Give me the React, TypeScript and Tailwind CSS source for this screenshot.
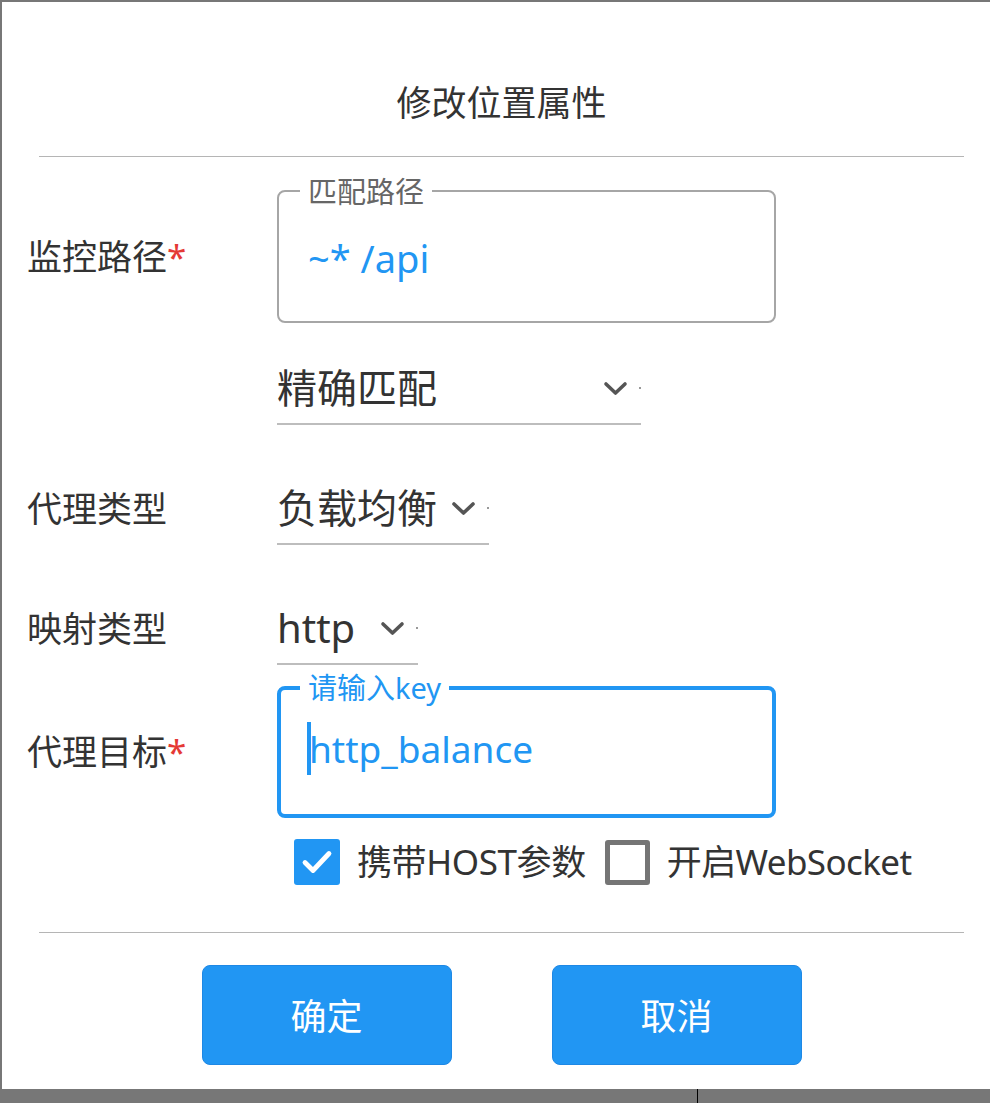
const BLUE = "#2196f3";

function Chevron() {
  return (
    <svg width="25" height="15" viewBox="0 0 25 15" className="shrink-0">
      <polyline points="3,3 12.5,12 22,3" fill="none" stroke="#555" strokeWidth="3.6" strokeLinecap="round" strokeLinejoin="round" />
    </svg>
  );
}

function Select({ text, w }: { text: string; w: string }) {
  return (
    <div className={`${w} h-[72px] border-b-2 border-[#bdbdbd] flex items-center`}>
      <span className="text-[40px] leading-[48px] text-[#333] whitespace-nowrap">{text}</span>
      <div className="ml-auto flex items-center">
        <Chevron />
        <span className="ml-[11px] w-[2px] h-[2px] bg-[#999] block" />
      </div>
    </div>
  );
}

function Label({ text, required }: { text: string; required?: boolean }) {
  return (
    <div className="w-[250px] shrink-0 text-[35px] leading-[46px] text-[#333] whitespace-nowrap">
      {text}
      {required && <span className="text-[#e53935]">*</span>}
    </div>
  );
}

export default function App() {
  return (
    <div className="w-[990px] h-[1103px] bg-[#777] flex flex-col overflow-hidden font-['Noto_Sans','Noto_Sans_CJK_SC',sans-serif]">
      <div className="ml-[2px] mt-[2px] h-[1087px] bg-white flex flex-col">
        <div className="ml-[37px] w-[925px] h-[154px] flex justify-center pt-[78px]">
          <h1 className="text-[35px] leading-[46px] text-[#333]">修改位置属性</h1>
        </div>
        <div className="ml-[37px] w-[925px] h-px bg-[#b5b5b5]" />

        <div className="pl-[25px] flex flex-col">
          {/* 监控路径 */}
          <div className="mt-[33px] flex items-center">
            <Label text="监控路径" required />
            <div className="relative w-[499px] h-[133px] border-2 border-[#a6a6a6] rounded-[8px]">
              <span className="absolute left-[21px] top-[-20px] px-[8px] bg-white text-[29px] leading-[40px] text-[#666] whitespace-nowrap">匹配路径</span>
              <div className="pl-[29px] pt-[45px] text-[38px] leading-[42px] text-[#2196f3]">~* /api</div>
            </div>
          </div>

          {/* 匹配方式 */}
          <div className="mt-[30px] flex">
            <div className="w-[250px] shrink-0" />
            <Select text="精确匹配" w="w-[364px]" />
          </div>

          {/* 代理类型 */}
          <div className="mt-[48px] flex items-center">
            <Label text="代理类型" />
            <Select text="负载均衡" w="w-[212px]" />
          </div>

          {/* 映射类型 */}
          <div className="mt-[48px] flex items-center">
            <Label text="映射类型" />
            <Select text="http" w="w-[141px]" />
          </div>

          {/* 代理目标 */}
          <div className="mt-[21px] flex items-center">
            <Label text="代理目标" required />
            <div className="relative w-[499px] h-[132px] border-4 border-[#2196f3] rounded-[8px]">
              <span className="absolute left-[19px] top-[-22px] px-[8px] bg-white text-[29px] leading-[40px] text-[#2196f3] whitespace-nowrap">请输入key</span>
              <div className="pl-[26px] pt-[32px] flex items-center">
                <span className="block w-[4px] h-[53px] bg-[#2196f3]" />
                <span className="-ml-[2px] text-[37px] leading-[53px] text-[#2196f3]">http_balance</span>
              </div>
            </div>
          </div>

          {/* checkboxes */}
          <div className="mt-[21px] ml-[267px] flex items-center">
            <div className="w-[46px] h-[46px] rounded-[3px] flex items-center justify-center" style={{ backgroundColor: BLUE }}>
              <svg width="36" height="36" viewBox="0 0 36 36">
                <polyline points="6,18.5 14,26.5 30,9.5" fill="none" stroke="#fff" strokeWidth="4.8" strokeLinecap="round" strokeLinejoin="round" />
              </svg>
            </div>
            <span className="ml-[17px] text-[35px] leading-[46px] text-[#333] whitespace-nowrap tracking-[-0.4px]">携带HOST参数</span>
            <div className="ml-[19px] w-[45px] h-[45px] border-[5px] border-[#757575] rounded-[3px]" />
            <span className="ml-[17px] text-[35px] leading-[46px] text-[#333] whitespace-nowrap tracking-[-0.6px]">开启WebSocket</span>
          </div>
        </div>

        <div className="mt-[47px] ml-[37px] w-[925px] h-px bg-[#b5b5b5]" />

        <div className="mt-[32px] ml-[37px] w-[925px] flex justify-center gap-[100px]">
          <button className="w-[250px] h-[100px] bg-[#2196f3] border border-[#1e88e5] rounded-[8px] text-white text-[36px] leading-[46px] pt-[4px]">确定</button>
          <button className="w-[250px] h-[100px] bg-[#2196f3] border border-[#1e88e5] rounded-[8px] text-white text-[36px] leading-[46px] pt-[4px]">取消</button>
        </div>
      </div>
      <div className="flex h-[14px]">
        <div className="w-[697px] h-full" />
        <div className="w-px h-full bg-black" />
      </div>
    </div>
  );
}
